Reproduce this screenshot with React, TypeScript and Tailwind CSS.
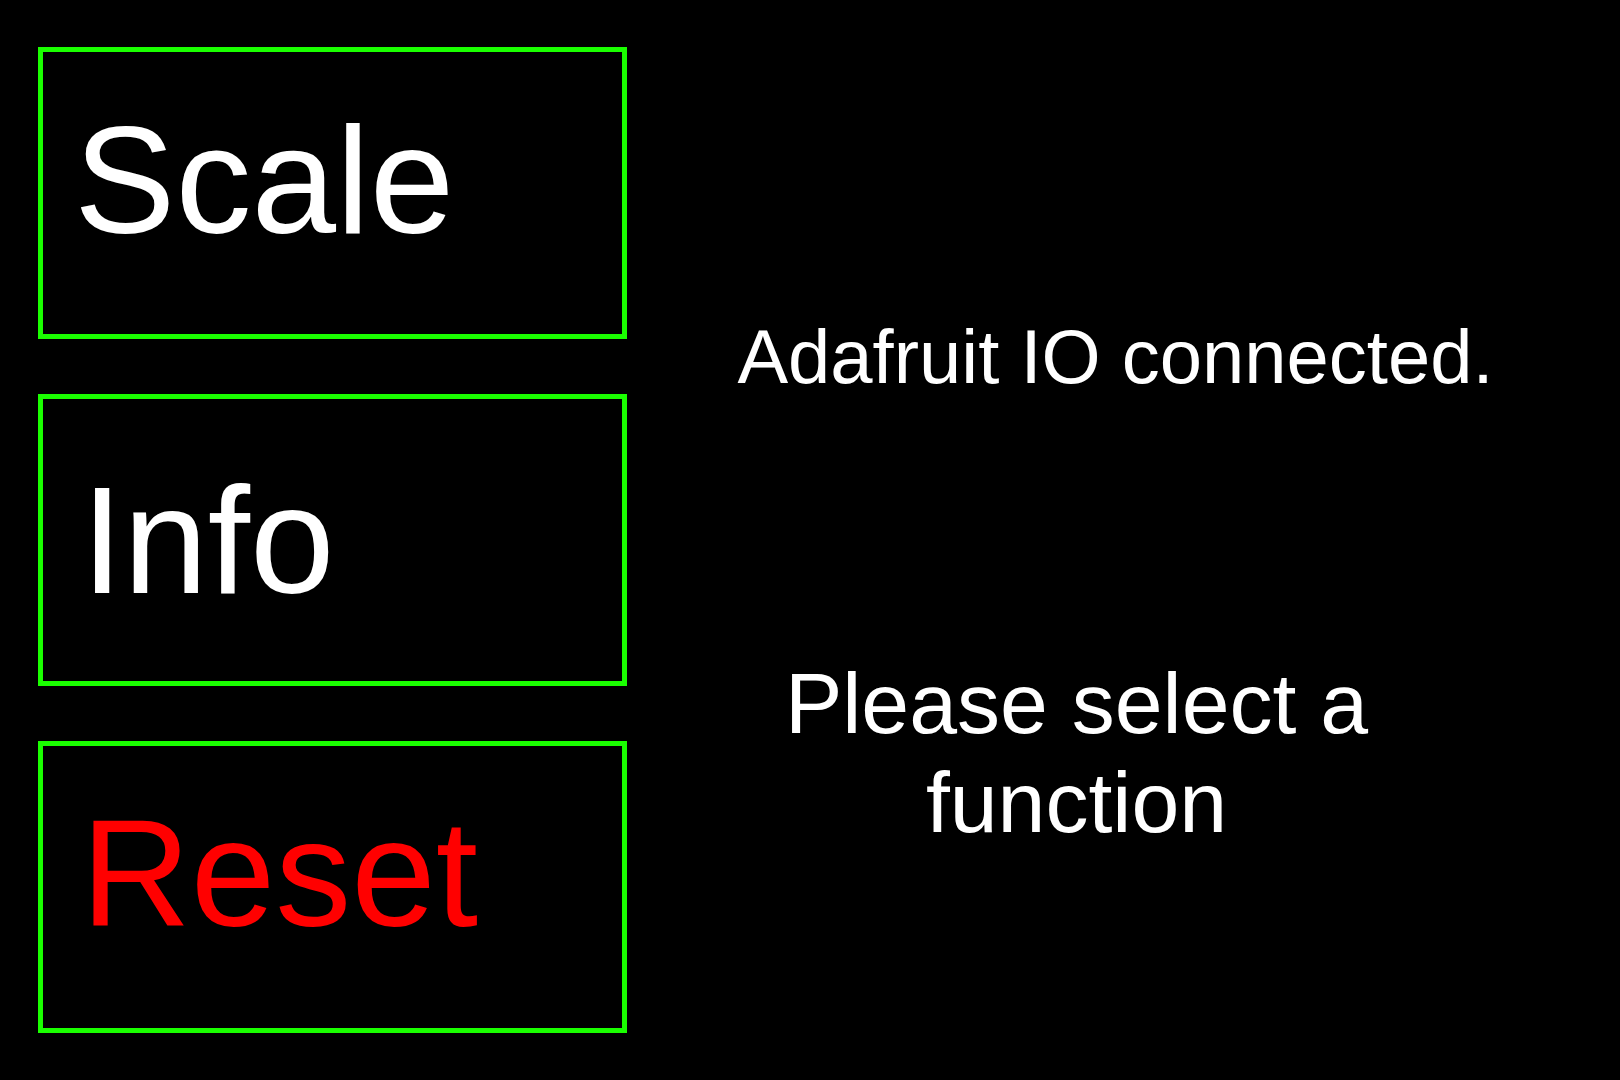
import React from "react";

const font = { fontFamily: '"Liberation Sans", Arial, sans-serif' };

export default function App() {
  return (
    <div className="w-[1620px] h-[1080px] bg-black flex overflow-hidden" style={font}>
      <div className="flex flex-col gap-[55px] pt-[47px] pl-[38px]">
        <div className="w-[589px] h-[292px] border-[5px] border-[#1aff00] pl-[31px] pt-[52px]">
          <div className="text-[152px] leading-none text-white">Scale</div>
        </div>
        <div className="w-[589px] h-[292px] border-[5px] border-[#1aff00] pl-[38px] pt-[65px]">
          <div className="text-[152px] leading-none text-white">Info</div>
        </div>
        <div className="w-[589px] h-[292px] border-[5px] border-[#1aff00] pl-[38px] pt-[51px]">
          <div className="text-[152px] leading-none text-[#ff0000]">Reset</div>
        </div>
      </div>
      <div className="flex-1 flex flex-col pt-[319px]">
        <div className="text-center text-[76px] leading-none text-white pr-[16px]">Adafruit IO connected.</div>
        <div className="mt-[259px] text-center text-[86px] leading-[99px] text-white pr-[94px]">
          Please select a<br />function
        </div>
      </div>
    </div>
  );
}
